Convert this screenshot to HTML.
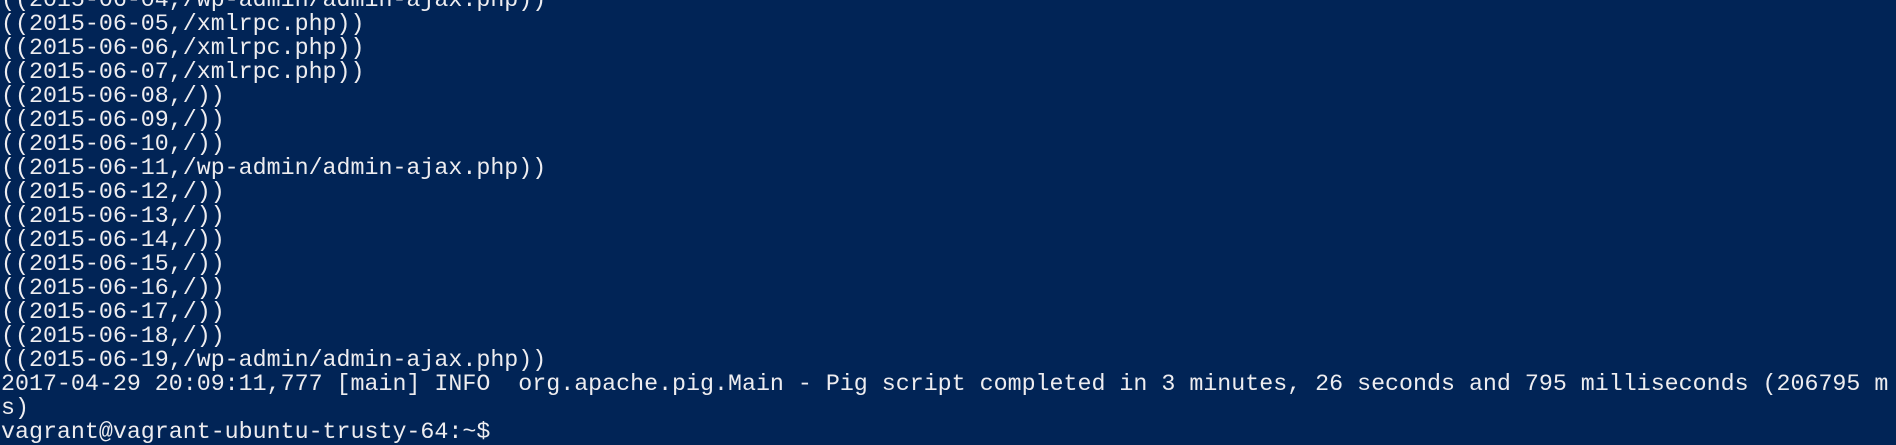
<!DOCTYPE html>
<html><head><meta charset="utf-8"><style>
html,body{margin:0;padding:0;width:1896px;height:431px;overflow:hidden;background:#012456;}
pre{position:absolute;left:1px;top:-12px;margin:0;font-family:"Liberation Mono",monospace;font-size:23.3px;line-height:24px;color:#eeedf0;white-space:pre;}
</style></head><body><pre>((2015-06-04,/wp-admin/admin-ajax.php))
((2015-06-05,/xmlrpc.php))
((2015-06-06,/xmlrpc.php))
((2015-06-07,/xmlrpc.php))
((2015-06-08,/))
((2015-06-09,/))
((2015-06-10,/))
((2015-06-11,/wp-admin/admin-ajax.php))
((2015-06-12,/))
((2015-06-13,/))
((2015-06-14,/))
((2015-06-15,/))
((2015-06-16,/))
((2015-06-17,/))
((2015-06-18,/))
((2015-06-19,/wp-admin/admin-ajax.php))
2017-04-29 20:09:11,777 [main] INFO  org.apache.pig.Main - Pig script completed in 3 minutes, 26 seconds and 795 milliseconds (206795 m
s)
vagrant@vagrant-ubuntu-trusty-64:~$</pre></body></html>
